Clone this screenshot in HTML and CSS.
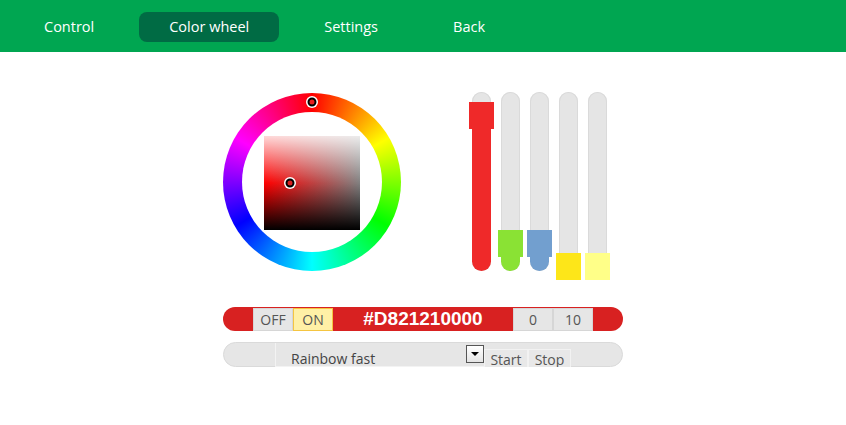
FILE: index.html
```html
<!DOCTYPE html>
<html lang="en">
  <head>
    <meta charset="UTF-8" />
    <meta name="viewport" content="width=device-width, initial-scale=1.0" />
    <title>Color wheel</title>
    <link rel="stylesheet" href="styles.css">
  </head>
  <body>
    <nav class="nav">
      <a class="nav-item">Control</a>
      <a class="nav-item active">Color wheel</a>
      <a class="nav-item">Settings</a>
      <a class="nav-item">Back</a>
    </nav>

    <main class="panel">
      <div class="picker">
        <!-- Hue ring + saturation/lightness square -->
        <div class="wheel">
          <div class="wheel-inner">
            <div class="sv-square"></div>
          </div>
          <span class="marker hue-marker"></span>
          <span class="marker sv-marker"></span>
        </div>

        <!-- Channel sliders: R G B W WW -->
        <div class="channels">
          <div class="channel ch-red" style="--top: 10px">
            <div class="track"></div>
            <div class="fill"></div>
            <div class="handle"></div>
          </div>
          <div class="channel ch-green" style="--top: 138px">
            <div class="track"></div>
            <div class="fill"></div>
            <div class="handle"></div>
          </div>
          <div class="channel ch-blue" style="--top: 138px">
            <div class="track"></div>
            <div class="fill"></div>
            <div class="handle"></div>
          </div>
          <div class="channel ch-white" style="--top: 161px">
            <div class="track"></div>
            <div class="fill"></div>
            <div class="handle"></div>
          </div>
          <div class="channel ch-warm" style="--top: 161px">
            <div class="track"></div>
            <div class="fill"></div>
            <div class="handle"></div>
          </div>
        </div>
      </div>

      <div class="color-bar">
        <button class="seg">OFF</button>
        <button class="seg seg-on">ON</button>
        <span class="hex">#D821210000</span>
        <button class="seg">0</button>
        <button class="seg">10</button>
      </div>

      <div class="program-bar">
        <div class="select">
          Rainbow fast
          <span class="select-arrow"></span>
        </div>
        <button class="prog-btn start">Start</button>
        <button class="prog-btn stop">Stop</button>
      </div>
    </main>
  </body>
</html>
```

FILE: styles.css
```css
body {
  margin: 0;
  font-family: "Open Sans", "DejaVu Sans", sans-serif;
  background-color: white;
  color: #444;
}

button {
  font-family: inherit;
  cursor: pointer;
}

/* Top navigation */
.nav {
  display: flex;
  gap: 15px;
  height: 40px;
  padding: 12px 0 0 14px;
  background-color: #00a651;
}

.nav-item {
  height: 30px;
  padding: 0 30px;
  line-height: 30px;
  font-size: 14.5px;
  color: white;
  border-radius: 8px;
}

.nav-item.active {
  background-color: #006b44;
}

/* Main panel */
.panel {
  width: 400px;
  margin: 40px auto 0;
}

.picker {
  display: flex;
  height: 179px;
}

.wheel {
  position: relative;
  width: 178px;
  height: 178px;
  margin-top: 1px;
  border-radius: 50%;
  background: conic-gradient(#f00, #ff0, #0f0, #0ff, #00f, #f0f, #f00);
  display: flex;
  align-items: center;
  justify-content: center;
}

.wheel-inner {
  width: 140px;
  height: 140px;
  border-radius: 50%;
  background-color: white;
  display: flex;
  align-items: center;
  justify-content: center;
}

.sv-square {
  width: 96px;
  height: 94px;
  margin-top: 2px;
  background:
    linear-gradient(to bottom, rgba(255, 255, 255, 0.85) 0%, rgba(255, 255, 255, 0) 50%, rgba(0, 0, 0, 0) 50%, #000 100%),
    linear-gradient(to right, rgba(128, 128, 128, 0), #808080),
    #f00;
}

.marker {
  position: absolute;
  width: 5px;
  height: 5px;
  border: 2px solid #000;
  border-radius: 50%;
  box-shadow: 0 0 0 1.5px white;
  transform: translate(-50%, -50%);
}

.hue-marker {
  left: 89px;
  top: 9px;
  background-color: #e81e1e;
}

.sv-marker {
  left: 67px;
  top: 90px;
  background-color: #d82121;
}

/* Vertical channel sliders */
.channels {
  display: flex;
  gap: 4px;
  margin-left: 68px;
}

.channel {
  position: relative;
  width: 25px;
  height: 179px;
}

.track,
.fill {
  position: absolute;
  left: 3px;
  width: 19px;
  bottom: 0;
  border-radius: 10px;
}

.track {
  top: 0;
  background-color: #e5e5e5;
  box-shadow: inset 0 0 0 1px #dadada;
}

.fill {
  top: var(--top);
  border-radius: 0 0 10px 10px;
}

.handle {
  position: absolute;
  left: 0;
  top: var(--top);
  width: 25px;
  height: 27px;
}

.ch-red .fill,
.ch-red .handle {
  background-color: #ef2929;
}

.ch-green .fill,
.ch-green .handle {
  background-color: #8ae234;
}

.ch-blue .fill,
.ch-blue .handle {
  background-color: #729fcf;
}

.ch-white .handle {
  background-color: #fde619;
}

.ch-warm .handle {
  background-color: #ffff88;
}

/* Colour output bar */
.color-bar {
  display: flex;
  align-items: center;
  height: 24px;
  margin-top: 36px;
  padding: 0 30px;
  background-color: #d82121;
  border-radius: 12px;
}

.seg {
  width: 40px;
  height: 23px;
  margin: 1px 0 0;
  padding: 0;
  font-size: 14px;
  color: #555;
  background-color: #e6e6e6;
  border: 1px solid #d6d6d6;
}

.seg-on {
  background-color: #fff0a6;
  border-color: #f5c541;
}

.hex {
  flex: 1;
  text-align: center;
  font-family: "Liberation Sans", Arial, sans-serif;
  font-weight: bold;
  font-size: 19px;
  color: white;
}

/* Program selector */
.program-bar {
  display: flex;
  box-sizing: border-box;
  height: 25px;
  margin-top: 11px;
  padding-left: 51px;
  background-color: #e6e6e6;
  border: 1px solid #dadada;
  border-radius: 13px;
}

.select {
  position: relative;
  box-sizing: border-box;
  width: 209px;
  height: 24px;
  padding: 6px 0 0 15px;
  font-size: 14px;
  line-height: 20px;
  color: #444;
  border-left: 1px solid #f3f3f3;
  border-bottom: 1px solid #f3f3f3;
}

.select-arrow {
  position: absolute;
  right: 0;
  top: 2px;
  box-sizing: border-box;
  width: 18px;
  height: 18px;
  border: 1px solid #555;
  background: linear-gradient(#fff, #e4e4e4);
}

.select-arrow::after {
  content: "";
  position: absolute;
  left: 4px;
  top: 6px;
  border-left: 4px solid transparent;
  border-right: 4px solid transparent;
  border-top: 4px solid #000;
}

.prog-btn {
  align-self: flex-start;
  box-sizing: border-box;
  height: 22px;
  margin-top: 6px;
  padding: 0;
  font-size: 14px;
  line-height: 20px;
  color: #555;
  background-color: #e8e8e8;
  border: 1px solid #f2f2f2;
}

.start {
  width: 44px;
}

.stop {
  width: 43px;
}
```
